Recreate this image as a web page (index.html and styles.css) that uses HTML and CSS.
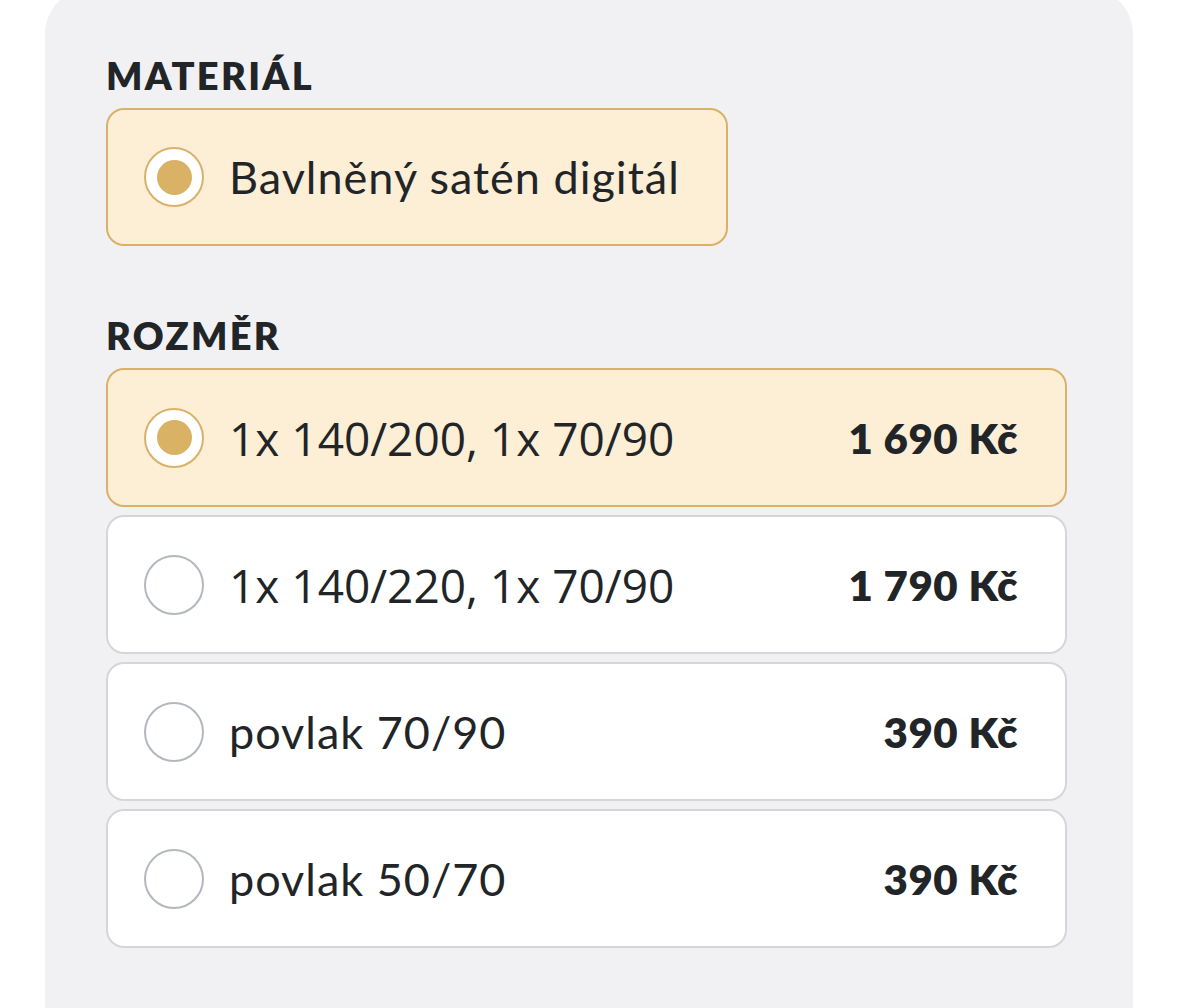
FILE: index.html
```html
<!DOCTYPE html>
<html lang="cs">
<head>
<meta charset="utf-8">
<title>Výběr varianty</title>
<link rel="stylesheet" href="styles.css">
</head>
<body>
<div class="panel">
  <section class="group">
    <h2 class="label">MATERIÁL</h2>
    <div class="options">
      <label class="option option--fit is-selected">
        <span class="radio"></span>
        <span class="name">Bavlněný satén digitál</span>
      </label>
    </div>
  </section>
  <section class="group">
    <h2 class="label">ROZMĚR</h2>
    <div class="options">
      <label class="option is-selected">
        <span class="radio"></span>
        <span class="name name--num">1x 140/200, 1x 70/90</span>
        <span class="price">1 690 Kč</span>
      </label>
      <label class="option">
        <span class="radio"></span>
        <span class="name name--num">1x 140/220, 1x 70/90</span>
        <span class="price">1 790 Kč</span>
      </label>
      <label class="option">
        <span class="radio"></span>
        <span class="name">povlak 70/90</span>
        <span class="price">390 Kč</span>
      </label>
      <label class="option">
        <span class="radio"></span>
        <span class="name">povlak 50/70</span>
        <span class="price">390 Kč</span>
      </label>
    </div>
  </section>
</div>
</body>
</html>
```

FILE: styles.css
```css
* { box-sizing: border-box; }

html, body {
  margin: 0;
  padding: 0;
  background: #ffffff;
  height: 100%;
  overflow: hidden;
}

body {
  font-family: "Lato", "Noto Sans", sans-serif;
  color: #222528;
}

.panel {
  margin: -12px 0 0 45px;
  width: 1088px;
  min-height: 1020px;
  background: #f1f1f4;
  border-radius: 46px 46px 0 0;
  padding: 68px 66px 0 61px;
  display: flex;
  flex-direction: column;
  gap: 70px;
}

.label {
  margin: 0 0 14px;
  font-size: 38px;
  line-height: 38px;
  font-weight: 800;
  letter-spacing: 2.3px;
  color: #222528;
}

.options {
  display: flex;
  flex-direction: column;
  align-items: flex-start;
  gap: 8px;
}

.option {
  display: flex;
  align-items: center;
  width: 100%;
  height: 139px;
  padding: 0 47px 0 36px;
  background: #ffffff;
  border: 2px solid #d6d6da;
  border-radius: 18px;
}

.option--fit {
  width: auto;
  height: 138px;
  padding-right: 46px;
}

.option.is-selected {
  background: #fdeed6;
  border-color: #dab169;
}

.radio {
  flex: none;
  width: 60px;
  height: 60px;
  border-radius: 50%;
  border: 2.5px solid #b3b8be;
  background: #ffffff;
  display: flex;
  align-items: center;
  justify-content: center;
}

.is-selected .radio {
  border-color: #dab169;
}

.is-selected .radio::after {
  content: "";
  width: 35px;
  height: 35px;
  border-radius: 50%;
  background: #d9b265;
}

.name {
  margin-left: 25px;
  font-size: 45px;
  font-weight: 400;
  letter-spacing: 1px;
  flex: 1;
  white-space: nowrap;
}

.name--num {
  font-family: "Open Sans", "Noto Sans", sans-serif;
  font-size: 46px;
  letter-spacing: 0;
}

.price {
  font-size: 42px;
  font-weight: 800;
  letter-spacing: 0.5px;
  white-space: nowrap;
}
```
